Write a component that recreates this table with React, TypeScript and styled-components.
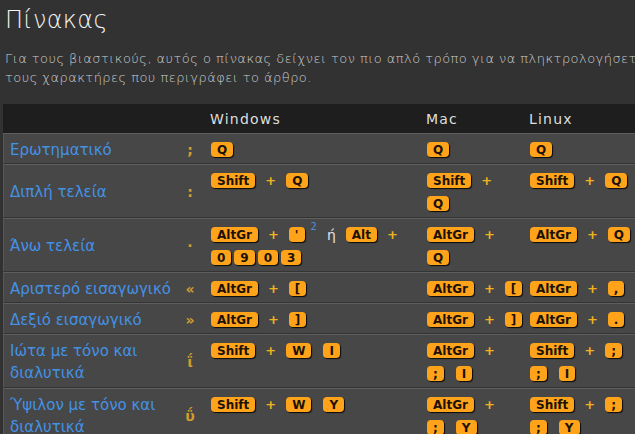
import React from 'react';
import styled, { createGlobalStyle } from 'styled-components';

type Cell = string[][];

interface Row {
	name: string;
	sym: string;
	win: Cell;
	mac: Cell;
	linux: Cell;
}

const rows: Row[] = [
	{ name: 'Ερωτηματικό', sym: ';', win: [['Q']], mac: [['Q']], linux: [['Q']] },
	{
		name: 'Διπλή τελεία',
		sym: ':',
		win: [['Shift', '+', 'Q']],
		mac: [['Shift', '+'], ['Q']],
		linux: [['Shift', '+', 'Q']],
	},
	{
		name: 'Άνω τελεία',
		sym: '·',
		win: [['AltGr', '+', "'", '^2', 'ή', 'Alt', '+'], ['#0903']],
		mac: [['AltGr', '+'], ['Q']],
		linux: [['AltGr', '+', 'Q']],
	},
	{
		name: 'Αριστερό εισαγωγικό',
		sym: '«',
		win: [['AltGr', '+', '[']],
		mac: [['AltGr', '+', '[']],
		linux: [['AltGr', '+', ',']],
	},
	{
		name: 'Δεξιό εισαγωγικό',
		sym: '»',
		win: [['AltGr', '+', ']']],
		mac: [['AltGr', '+', ']']],
		linux: [['AltGr', '+', '.']],
	},
	{
		name: 'Ιώτα με τόνο και διαλυτικά',
		sym: 'ΐ',
		win: [['Shift', '+', 'W', 'I']],
		mac: [['AltGr', '+'], [';', 'I']],
		linux: [['Shift', '+', ';'], [';', 'I']],
	},
	{
		name: 'Ύψιλον με τόνο και διαλυτικά',
		sym: 'ΰ',
		win: [['Shift', '+', 'W', 'Y']],
		mac: [['AltGr', '+'], [';', 'Y']],
		linux: [['Shift', '+', ';'], [';', 'Y']],
	},
];

const GlobalStyle = createGlobalStyle`
	html, body {
		margin: 0;
		padding: 0;
		background: #323232;
		overflow: hidden;
	}
	body {
		font-family: 'DejaVu Sans', 'Liberation Sans', sans-serif;
		color: #cfcfcf;
	}
`;

const Page = styled.div`
	width: 640px;
	padding-left: 3px;
`;

const Title = styled.h1`
	margin: 6px 0 0 2px;
	font-size: 24px;
	line-height: 28px;
	font-weight: 200;
	letter-spacing: 0.3px;
	color: #f4f4f4;
`;

const Intro = styled.p`
	margin: 15px 0 17px 2px;
	font-size: 13px;
	line-height: 19px;
	font-weight: 200;
	letter-spacing: 0.45px;
	color: #d0d0d0;
	white-space: nowrap;
`;

const Table = styled.table`
	border-collapse: separate;
	border-spacing: 0;
	table-layout: fixed;
	width: 634px;
`;

const HeadCell = styled.th`
	background: #1e1e1e;
	height: 29px;
	padding: 0 0 0 4px;
	text-align: left;
	font-size: 14px;
	font-weight: normal;
	letter-spacing: 1.2px;
	color: #dedede;
`;

const Td = styled.td`
	background: #474747;
	border-top: 1px solid #5e5e5e;
	border-bottom: 1px solid #343434;
	padding: 4px 5px 2px;
	vertical-align: top;
`;

const NameCell = styled(Td)`
	border-left: 1px solid #575757;
	padding: 4px 4px 2px 6px;
	vertical-align: middle;
	font-size: 15px;
	line-height: 22px;
	color: #4392e6;
`;

const SymCell = styled(Td)`
	padding: 4px 6px 2px 0;
	vertical-align: middle;
	text-align: center;
	font-size: 14px;
	font-weight: bold;
	color: #d19d2c;
`;

const Key = styled.span`
	display: inline-flex;
	align-items: center;
	height: 15px;
	padding: 0 6px;
	border-radius: 4px;
	background: #ffa31a;
	box-shadow: 1px 1px 1px rgba(0, 0, 0, 0.85);
	font-size: 12px;
	font-weight: bold;
	color: #1c1204;
`;

const Plus = styled.span`
	margin: 0 10px;
	font-size: 13px;
	font-weight: bold;
	color: #f2b21e;
`;

const Sup = styled.span`
	align-self: flex-start;
	margin: -2px 0 0 6px;
	font-size: 10px;
	color: #4a8fdc;
`;

const Or = styled.span`
	margin: 0 10px;
	font-size: 14px;
	color: #e2e2e2;
`;

const Digits = styled.span`
	display: inline-flex;
	gap: 3px;
`;

const Line = styled.div`
	display: flex;
	align-items: center;
	height: 23px;
	white-space: nowrap;
	& > ${Key} + ${Key} {
		margin-left: 12px;
	}
`;

const renderToken = (t: string, i: number) => {
	if (t === '+') return <Plus key={i}>+</Plus>;
	if (t === 'ή') return <Or key={i}>{t}</Or>;
	if (t.startsWith('^')) return <Sup key={i}>{t.slice(1)}</Sup>;
	if (t.startsWith('#'))
		return (
			<Digits key={i}>
				{t
					.slice(1)
					.split('')
					.map((d, j) => (
						<Key key={j}>{d}</Key>
					))}
			</Digits>
		);
	return <Key key={i}>{t}</Key>;
};

const Keys = ({ cell }: { cell: Cell }) => (
	<Td>
		{cell.map((line, i) => (
			<Line key={i}>{line.map(renderToken)}</Line>
		))}
	</Td>
);

const App = () => {
	return (
		<Page>
			<GlobalStyle />
			<Title>Πίνακας</Title>
			<Intro>
				Για τους βιαστικούς, αυτός ο πίνακας δείχνει τον πιο απλό τρόπο για να
				πληκτρολογήσετε
				<br />
				τους χαρακτήρες που περιγράφει το άρθρο.
			</Intro>
			<Table>
				<colgroup>
					<col style={{ width: 177 }} />
					<col style={{ width: 26 }} />
					<col style={{ width: 216 }} />
					<col style={{ width: 103 }} />
					<col style={{ width: 112 }} />
				</colgroup>
				<thead>
					<tr>
						<HeadCell />
						<HeadCell />
						<HeadCell>Windows</HeadCell>
						<HeadCell>Mac</HeadCell>
						<HeadCell>Linux</HeadCell>
					</tr>
				</thead>
				<tbody>
					{rows.map((r) => (
						<tr key={r.name}>
							<NameCell>{r.name}</NameCell>
							<SymCell>{r.sym}</SymCell>
							<Keys cell={r.win} />
							<Keys cell={r.mac} />
							<Keys cell={r.linux} />
						</tr>
					))}
				</tbody>
			</Table>
		</Page>
	);
};

export default App;
